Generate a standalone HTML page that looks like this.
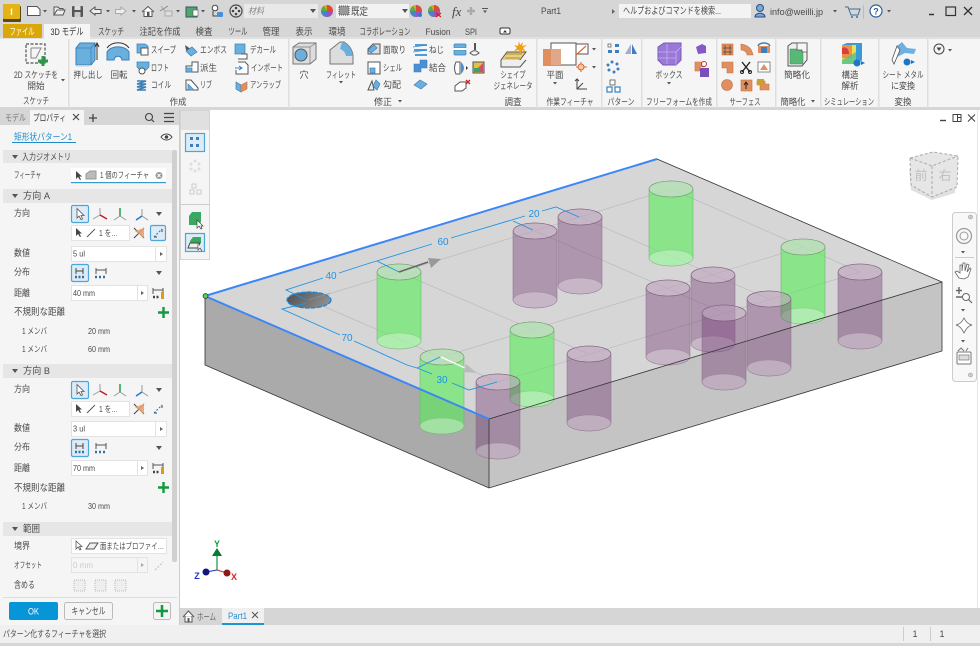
<!DOCTYPE html>
<html lang="ja"><head><meta charset="utf-8"><title>Part1</title>
<style>
html,body{margin:0;padding:0;background:#fff;width:980px;height:646px;overflow:hidden}
svg{display:block;position:absolute;left:0;top:0}
text{font-family:"Liberation Sans","Noto Sans CJK JP",sans-serif;font-size:9px;fill:#4a4a4a}
.c text,text.c{text-anchor:middle}
.b{fill:#6ab0de;stroke:#3a7fb5;stroke-width:.7}
.o{fill:#e09060;stroke:#c87040;stroke-width:.6}
.l{fill:none;stroke:#555;stroke-width:1}
.inp{fill:#fff;stroke:#e3e3e3;stroke-width:1}
.sec{fill:#e6e6e6}
.sel{fill:#dcebf5;stroke:#4ea5d8;stroke-width:1.2}
</style></head><body>
<svg width="980" height="646" viewBox="0 0 980 646" xmlns="http://www.w3.org/2000/svg">
<defs>
<linearGradient id="hg" x1="0" y1="0" x2="1" y2=".3"><stop offset="0" stop-color="#4e4e4e"/><stop offset="1" stop-color="#8c8c8c"/></linearGradient>
<g id="gc"><path d="M-22 0V69A22 8 0 0 0 22 69V0A22 8 0 0 0-22 0Z" fill="#57ec57" fill-opacity=".6" stroke="#6bb06b" stroke-width=".5"/><ellipse cy="69" rx="22" ry="8" fill="#fff" fill-opacity=".32" stroke="#6bb06b" stroke-opacity=".5" stroke-width=".5"/><ellipse rx="22" ry="8" fill="#d8d8d8" fill-opacity=".62" stroke="#6a9a6a" stroke-width=".6"/></g>
<g id="pc"><path d="M-22 0V69A22 8 0 0 0 22 69V0A22 8 0 0 0-22 0Z" fill="#6e326e" fill-opacity=".38" stroke="#8a6a8a" stroke-width=".5"/><ellipse cy="69" rx="22" ry="8" fill="#fff" fill-opacity=".3" stroke="#8a6a8a" stroke-opacity=".5" stroke-width=".5"/><ellipse rx="22" ry="8" fill="#fff" fill-opacity=".3" stroke="#7a5a7a" stroke-width=".6"/></g>
<g id="wheel"><circle r="6" fill="#e2a020"/><path d="M0 0V-6A6 6 0 0 1 6 0Z" fill="#d84a3a"/><path d="M0 0H6A6 6 0 0 1 0 6Z" fill="#a050c0"/><path d="M0 0V6A6 6 0 0 1-6 0Z" fill="#4a80d0"/><path d="M0 0H-6A6 6 0 0 1-3 -5Z" fill="#50b050"/></g>
<g id="tri"><path d="M-3-2H3L0 2Z" fill="#555"/></g>
<g id="dd"><path d="M-2-1H2L0 1.5Z" fill="#555"/></g>
</defs>

<!-- window chrome -->
<rect width="980" height="646" fill="#fff"/>
<rect width="980" height="39" fill="#d6d6d6"/>
<rect y="39" width="980" height="69" fill="#f5f5f5"/>
<rect y="37" width="980" height="2" fill="#e0e0e0"/>
<rect y="107" width="980" height="3" fill="#d6d6d6"/>

<!-- quick access -->
<rect x="3" y="6" width="18" height="16" rx="1" fill="#5a4a10"/>
<rect x="3" y="4" width="17" height="15" rx="1" fill="#e4b416"/>
<text x="11.500" y="15" class="c" style="font-size:9px;font-weight:bold;fill:#fff">I</text>
<path d="M27.500 6.500H37L40 9.500V15.500H27.500Z" fill="#fff" stroke="#555"/><use href="#dd" x="45" y="11"/>
<path d="M54 15V7H58L59.500 8.500H63V10M54 15L57 10H65L63 15Z" fill="#eee" stroke="#555"/>
<rect x="72" y="6" width="11" height="11" rx="1" fill="#555"/><rect x="74.500" y="6" width="6" height="4" fill="#ddd"/><rect x="74.500" y="12" width="6" height="5" fill="#ccc"/>
<path d="M90 11L95 7V9.500H101V13.500H95V15Z" fill="#eee" stroke="#555"/><use href="#dd" x="108" y="11"/>
<path d="M126 11L121 7V9.500H115.500V13.500H121V15Z" fill="#eee" stroke="#aaa"/><use href="#dd" x="134" y="11"/>
<path d="M142 12L148 6.500L154 12M144 11V16.500H152V11" fill="#fff" stroke="#555"/><rect x="147" y="12" width="2.500" height="4.500" fill="#555"/>
<path d="M161 6L165 11V16H172V11H165" fill="#ddd" stroke="#aaa"/><path d="M160 11L168 6" stroke="#888"/><use href="#dd" x="178" y="11"/>
<rect x="186" y="7" width="11" height="10" fill="#4fa86a" stroke="#357"/><rect x="193" y="10" width="5" height="6" fill="#fff" stroke="#555" stroke-width=".6"/><use href="#dd" x="203" y="11"/>
<circle cx="215" cy="8" r="2.800" fill="#fff" stroke="#444"/><path d="M213 11V16H217" fill="none" stroke="#444"/><rect x="217" y="12" width="6" height="5" rx="1" fill="#4a8fd8"/>
<circle cx="236" cy="11" r="6" fill="#ddd" stroke="#444" stroke-width="1.200"/><circle cx="236" cy="8" r="1.300" fill="#444"/><circle cx="236" cy="14" r="1.300" fill="#444"/><circle cx="233" cy="11" r="1.300" fill="#444"/><circle cx="239" cy="11" r="1.300" fill="#444"/>
<rect x="244" y="4" width="74" height="14" fill="#e9e9e9"/><text x="248" y="14" style="font-style:italic;fill:#888" textLength="16" lengthAdjust="spacingAndGlyphs">材料</text><use href="#tri" x="313" y="11"/>
<use href="#wheel" x="327" y="11"/>
<rect x="336" y="4" width="73" height="14" fill="#f2f2f2"/><rect x="339" y="6" width="10" height="9" fill="#999" stroke="#555" stroke-dasharray="1 1"/><text x="351" y="15" style="font-size:10px" textLength="17" lengthAdjust="spacingAndGlyphs">既定</text><use href="#tri" x="405" y="11"/>
<use href="#wheel" x="416" y="11"/><circle cx="420" cy="15" r="2" fill="#2a7fd0"/>
<use href="#wheel" x="434" y="11"/><path d="M436 13L441 17M441 13L436 17" stroke="#d02020" stroke-width="1.300"/>
<text x="452" y="16" style="font-family:'Liberation Serif',serif;font-style:italic;font-size:13px;fill:#444">fx</text>
<path d="M471 7V15M467 11H475" stroke="#aaa" stroke-width="2.500"/>
<path d="M482 8.500H488" stroke="#555"/><use href="#dd" x="485" y="11.500"/>
<text x="541" y="14" style="font-size:9.500px" textLength="20" lengthAdjust="spacingAndGlyphs">Part1</text>
<path d="M612 9L615 11.500L612 14Z" fill="#666"/>
<rect x="619" y="4" width="132" height="14" fill="#f3f3f3"/><text x="623" y="14" style="font-size:9.500px" textLength="98" lengthAdjust="spacingAndGlyphs">ヘルプおよびコマンドを検索...</text>
<circle cx="760" cy="8" r="3.500" fill="#7aa7da" stroke="#2a4f86"/><path d="M755 17C755 12 765 12 765 17Z" fill="#7aa7da" stroke="#2a4f86"/>
<text x="770" y="15" style="font-size:9.500px" textLength="53" lengthAdjust="spacingAndGlyphs">info@weilli.jp</text><use href="#dd" x="835" y="11"/>
<path d="M845 7H848L851 15H858L860 9H849" fill="none" stroke="#3a6f9a"/><circle cx="852" cy="17" r="1" fill="#3a6f9a"/><circle cx="857" cy="17" r="1" fill="#3a6f9a"/>
<path d="M863.500 5V19" stroke="#bbb"/>
<circle cx="876" cy="11" r="6" fill="#fff" stroke="#2a5f96" stroke-width="1.200"/><text x="876" y="14.500" class="c" style="font-size:9px;font-weight:bold;fill:#2a5f96">?</text><use href="#dd" x="889" y="11"/>
<path d="M929 14.500H934" stroke="#333" stroke-width="1.500"/><rect x="946" y="7" width="9.500" height="8.500" fill="none" stroke="#333" stroke-width="1.200"/><path d="M964 7L972 15M972 7L964 15" stroke="#333" stroke-width="1.300"/>

<!-- tabs -->
<rect x="3" y="24" width="39" height="14" fill="#d9a808"/>
<text x="22" y="35" class="c" style="font-size:9.500px;fill:#fff" textLength="25" lengthAdjust="spacingAndGlyphs">ファイル</text>
<rect x="44" y="24" width="46" height="15" fill="#f5f5f5"/>
<g class="c">
<text x="67" y="35" style="font-size:9.500px;fill:#333" textLength="33" lengthAdjust="spacingAndGlyphs">3D モデル</text>
<text x="111" y="35" style="font-size:9.500px" textLength="26" lengthAdjust="spacingAndGlyphs">スケッチ</text>
<text x="160" y="35" style="font-size:9.500px" textLength="41" lengthAdjust="spacingAndGlyphs">注記を作成</text>
<text x="204" y="35" style="font-size:9.500px" textLength="17" lengthAdjust="spacingAndGlyphs">検査</text>
<text x="238" y="35" style="font-size:9.500px" textLength="19" lengthAdjust="spacingAndGlyphs">ツール</text>
<text x="271" y="35" style="font-size:9.500px" textLength="17" lengthAdjust="spacingAndGlyphs">管理</text>
<text x="304" y="35" style="font-size:9.500px" textLength="17" lengthAdjust="spacingAndGlyphs">表示</text>
<text x="337" y="35" style="font-size:9.500px" textLength="17" lengthAdjust="spacingAndGlyphs">環境</text>
<text x="385" y="35" style="font-size:9.500px" textLength="51" lengthAdjust="spacingAndGlyphs">コラボレーション</text>
<text x="438" y="35" style="font-size:9.500px" textLength="25" lengthAdjust="spacingAndGlyphs">Fusion</text>
<text x="471" y="35" style="font-size:9.500px" textLength="12" lengthAdjust="spacingAndGlyphs">SPI</text>
</g>
<rect x="500" y="28" width="10" height="6" rx="1.500" fill="#fff" stroke="#333"/><path d="M503 32.500L505 30L507 32.500Z" fill="#333"/>

<!-- ribbon separators -->
<g fill="#dedede">
<rect x="68" y="39" width="1.500" height="69"/><rect x="288" y="39" width="1.500" height="69"/><rect x="536" y="39" width="1.500" height="69"/><rect x="601" y="39" width="1.500" height="69"/><rect x="641" y="39" width="1.500" height="69"/><rect x="716" y="39" width="1.500" height="69"/><rect x="775" y="39" width="1.500" height="69"/><rect x="820" y="39" width="1.500" height="69"/><rect x="878" y="39" width="1.500" height="69"/><rect x="927" y="39" width="1.500" height="69"/>
</g>

<!-- ribbon icons: sketch / create -->
<rect x="26" y="44" width="19" height="19" fill="none" stroke="#555" stroke-width="1.200" stroke-dasharray="3 1.500"/><path d="M31 48V58H36L41 48H31" fill="none" stroke="#888"/><path d="M43 56V66M38 61H48" stroke="#2a9a4a" stroke-width="3"/>
<path d="M76 48L80 43H95V60L91 65H76Z" fill="#6ab0de" stroke="#3a7fb5"/><path d="M76 48H91V65M91 48L95 43" fill="none" stroke="#3a7fb5" stroke-width=".7"/><path d="M97 60V44M95 47L97 43L99 47" fill="none" stroke="#333"/><path d="M76 65H91L89 66.500H76Z" fill="#ccc"/>
<path d="M107 52C111 45 125 45 129 52L129 60H122C121 55 115 55 114 60H107Z" fill="#6ab0de" stroke="#3a7fb5"/><path d="M107 48C112 41 124 41 129 48" fill="none" stroke="#333"/>
<path d="M137 44H145L148 46V53H137Z" fill="#6ab0de" stroke="#3a7fb5" stroke-width=".7"/><rect x="141" y="48" width="7" height="7" fill="#fff" stroke="#555"/>
<path d="M137 62H149V67L146 70H140L137 67Z" class="b"/><circle cx="142" cy="71" r="3" fill="#fff" stroke="#555"/>
<path d="M137 81H146L137 84H146L137 87H146L137 90H146" fill="none" stroke="#3a7fb5" stroke-width="1.500"/>
<path d="M185 45L195 52L190 54L186 50Z" fill="#555"/><path d="M186 51L192 47L197 52L191 56Z" class="b"/>
<path d="M186 66H192V62H198V72H186Z" fill="#fff" stroke="#555"/><rect x="186" y="68" width="6" height="4" class="b"/>
<path d="M186 90V80H191L198 88V90Z" fill="#fff" stroke="#555"/><path d="M188 90V84L194 90Z" class="b"/>
<rect x="235" y="44" width="10" height="10" class="b"/><path d="M241 54H247V59H238" fill="#fff" stroke="#555"/>
<path d="M238 62H245L248 65V74H236V70" fill="#fff" stroke="#555"/><path d="M235 68H241M239 66L242 68L239 70" fill="none" stroke="#2a7fd0"/>
<path d="M236 82L241 85V92L236 89Z" class="b"/><path d="M241 85L247 82V89L241 92Z" class="o"/>

<!-- modify -->
<path d="M293 47L299 43H316V59L310 64H293Z" fill="#ddd" stroke="#777"/><path d="M293 47H310V64M310 47L316 43" fill="none" stroke="#777" stroke-width=".7"/><circle cx="301" cy="55" r="6" fill="#6ab0de" stroke="#555"/>
<path d="M330 64V50L340 42H344C349 45 352 49 353 55V64Z" fill="#ddd" stroke="#777"/><path d="M342 42C349 44 352 50 353 56L346 56C345 52 343 50 340 49Z" fill="#6ab0de"/>
<path d="M368 49L373 44H380V54H368Z" fill="#ddd" stroke="#555"/><path d="M368 50L374 45L377 48L371 53Z" class="b"/>
<rect x="368" y="62" width="12" height="12" fill="#fff" stroke="#555"/><rect x="370" y="68" width="5" height="5" class="b"/>
<path d="M368 90L372 81L374 90Z" fill="#eee" stroke="#555"/><path d="M376 80L380 84L377 90L373 86Z" class="b"/>
<path d="M415 45H427M414 50H427M415 55H427" stroke="#3a8fd0" stroke-width="1.700" fill="none"/><path d="M413 47L427 45M413 52L427 50" stroke="#3a8fd0" stroke-width=".8"/>
<path d="M414 72V64H420V60H427V68H421V72Z" fill="#4a90d8" stroke="#3a7fb5" stroke-width=".6"/>
<path d="M414 85L420 80L427 84L421 89Z" class="b"/>
<rect x="454" y="44" width="12" height="4" rx="1" class="b"/><rect x="454" y="50" width="12" height="5" rx="1" class="b"/><rect x="454" y="48" width="12" height="2" fill="#fff"/>
<path d="M470 53C473 50 476 50 479 53L476 55H473Z" fill="none" stroke="#555"/><path d="M475 43V50" stroke="#555" stroke-width="2"/>
<path d="M456 62H460V74H456C454 70 454 66 456 62Z" fill="#fff" stroke="#555"/><path d="M461 62C465 66 465 70 461 74Z" fill="#4a90d8"/><path d="M466 66L468 68L466 70Z" fill="#333"/>
<rect x="473" y="62" width="11" height="11" fill="#e8c040" stroke="#555"/><path d="M474 72L483 63V72Z" fill="#d0506a"/><path d="M474 72H480V68H474Z" fill="#40a070"/>
<path d="M455 86L460 82H466V88L462 91H455Z" fill="#fff" stroke="#555"/><path d="M466 80L470 84M470 80L466 84" stroke="#d02020" stroke-width="1.300"/>

<!-- shape generator -->
<path d="M501 60L507 52H526L520 60L501 66Z" fill="#e8d080" stroke="#555"/><path d="M501 60V67L520 67L526 60" fill="#eee" stroke="#555"/><path d="M506 54H522M505 58H520" stroke="#b09030"/>
<path d="M519 41L520 45L523 42L522 46L527 45L523 48L526 52L522 50L520 54L519 50L514 51L517 48L514 45L518 46Z" fill="#f0a010"/>
<!-- plane -->
<rect x="551" y="43" width="25" height="22" fill="#fff" stroke="#555"/><rect x="543" y="49" width="18" height="17" fill="#e09060"/><rect x="551" y="49" width="10" height="16" fill="#e0a888"/>
<rect x="576" y="44" width="12" height="10" fill="#fff" stroke="#555"/><path d="M576 55L586 46" stroke="#d86a30" stroke-width="1.200"/><use href="#dd" x="594" y="49"/>
<path d="M581 62V72M576 67H587" stroke="#d86a30"/><circle cx="581" cy="67" r="3" fill="#f3c8a8" stroke="#d86a30"/><use href="#dd" x="594" y="67"/>
<path d="M577 79V89H587M577 89L583 83" fill="none" stroke="#444"/><path d="M575 81L577 79L579 81" fill="none" stroke="#444"/>
<!-- pattern -->
<rect x="608" y="44" width="3" height="3" fill="#fff" stroke="#555" stroke-width=".7"/><rect x="615" y="44" width="4" height="3" fill="#3a80c0"/><rect x="608" y="50" width="4" height="3" fill="#3a80c0"/><rect x="615" y="50" width="4" height="3" fill="#3a80c0"/>
<path d="M625 54L631 44V54Z" fill="#aac"/><path d="M632 44L637 54H632Z" fill="#3a80c0"/>
<g fill="#3a80c0"><circle cx="612" cy="62" r="1.500"/><circle cx="617" cy="64" r="1.500"/><circle cx="618" cy="69" r="1.500"/><circle cx="614" cy="72" r="1.500"/><circle cx="609" cy="70" r="1.500"/><circle cx="608" cy="65" r="1.500"/></g>
<rect x="610" y="80" width="5" height="5" fill="#fff" stroke="#555" stroke-width=".8"/><rect x="607" y="87" width="5" height="5" fill="#fff" stroke="#3a80c0" stroke-width="1.200"/><rect x="615" y="87" width="5" height="5" fill="#fff" stroke="#3a80c0" stroke-width="1.200"/>
<!-- box -->
<path d="M658 47L664 43H681L681 60L676 65H663L658 60Z" fill="#9a78d8" stroke="#7a58b8"/><path d="M658 52H676V65M676 52L681 47M667 44V64M658 58H676" fill="none" stroke="#c8b0ee" stroke-width=".8"/>
<path d="M696 47L702 44L706 46V53L698 54Z" fill="#8858c8"/>
<path d="M695 62H704V67H700V71H695Z" class="o"/><rect x="700" y="68" width="9" height="9" fill="#7a50b8"/><circle cx="704" cy="64" r="2.500" fill="#fff" stroke="#d03030"/>
<!-- surface -->
<g class="o"><rect x="722" y="44" width="11" height="11"/><path d="M741 44C748 45 752 49 753 55H747C747 52 744 50 741 50Z"/><path d="M722 62H733V73H727V68H722Z"/><circle cx="727" cy="85" r="5.500"/><rect x="741" y="80" width="11" height="11"/><path d="M757 81H765V84H769V90H760V85H757Z"/></g>
<path d="M725 45V55M730 45V55M723 48H732M723 52H732" stroke="#444" stroke-width=".7" fill="none"/>
<path d="M758 46H770V53H758Z" fill="#e09060"/><path d="M758 46C760 42 768 42 770 46" fill="none" stroke="#3a80c0" stroke-width="1.500"/><rect x="761" y="47" width="6" height="6" fill="#3a80c0"/>
<path d="M742 62L750 72M750 62L742 72" stroke="#222" stroke-width="1.400"/><circle cx="742" cy="72" r="1.500" fill="none" stroke="#222"/><circle cx="750" cy="72" r="1.500" fill="none" stroke="#222"/>
<rect x="758" y="62" width="12" height="10" fill="#fff" stroke="#888"/><path d="M760 70L764 64L768 70Z" fill="#e09060"/>
<path d="M746 89V83M744 85L746 82L748 85" stroke="#222" fill="none"/><rect x="757" y="79" width="7" height="6" fill="#c8a030"/>
<!-- simplify -->
<path d="M788 46L792 43H807V60L802 66H788Z" fill="#f0f0f0" stroke="#555"/><rect x="790" y="49" width="13" height="15" fill="#58b878" stroke="#3a8a55" stroke-width=".5"/><path d="M797 43H807V52H802V50H797Z" fill="#f5f5f5" stroke="#555" stroke-width=".8"/>
<!-- analysis -->
<path d="M842 45L847 43H862V60L858 64H842Z" fill="#3a9ad8"/><path d="M842 45H856V64H842Z" fill="#e8e050"/><path d="M842 45H852V58H842Z" fill="#f09040"/><path d="M842 48C846 46 849 49 849 54H842Z" fill="#d84040"/><path d="M842 60L856 52V64H842Z" fill="#50c090" fill-opacity=".8"/>
<circle cx="857" cy="63" r="3.500" fill="#1a78c8"/><path d="M861 61L865 63L861 65Z" fill="#1a78c8"/>
<!-- sheet metal -->
<path d="M892 60L897 46L902 42L907 48L916 49L914 54L905 53L899 56Z" fill="#70b0e0"/><path d="M892 60L897 46L900 50L894 64Z" fill="#fff" stroke="#555" stroke-width=".8"/>
<circle cx="907" cy="62" r="3.500" fill="#1a78c8"/><path d="M911 60L915 62L911 64Z" fill="#1a78c8"/>
<circle cx="939" cy="49" r="5" fill="#f5f5f5" stroke="#444"/><path d="M936.500 47.500H941.500L939 51Z" fill="#444"/><use href="#dd" x="950" y="50"/>

<!-- ribbon text -->
<g class="c">
<text x="36" y="78" textLength="44" lengthAdjust="spacingAndGlyphs">2D スケッチを</text><text x="36" y="89" textLength="17" lengthAdjust="spacingAndGlyphs">開始</text><use href="#dd" x="63" y="80"/>
<text x="36" y="104" textLength="26" lengthAdjust="spacingAndGlyphs">スケッチ</text><text x="178" y="105" textLength="17" lengthAdjust="spacingAndGlyphs">作成</text>
<text x="88" y="78" textLength="29" lengthAdjust="spacingAndGlyphs">押し出し</text><text x="119" y="78" textLength="17" lengthAdjust="spacingAndGlyphs">回転</text>
<text x="304" y="78">穴</text><text x="341" y="78" textLength="30" lengthAdjust="spacingAndGlyphs">フィレット</text><use href="#dd" x="341" y="82"/>
<text x="383" y="105" textLength="18" lengthAdjust="spacingAndGlyphs">修正</text><use href="#dd" x="400" y="101"/>
<text x="513" y="78" textLength="25" lengthAdjust="spacingAndGlyphs">シェイプ</text><text x="513" y="89" textLength="39" lengthAdjust="spacingAndGlyphs">ジェネレータ</text><text x="513" y="105" textLength="17" lengthAdjust="spacingAndGlyphs">調査</text>
<text x="555" y="78" textLength="17" lengthAdjust="spacingAndGlyphs">平面</text><use href="#dd" x="555" y="83"/><text x="570" y="105" textLength="47" lengthAdjust="spacingAndGlyphs">作業フィーチャ</text>
<text x="621" y="105" textLength="27" lengthAdjust="spacingAndGlyphs">パターン</text>
<text x="669" y="78" textLength="27" lengthAdjust="spacingAndGlyphs">ボックス</text><use href="#dd" x="669" y="83"/><text x="679" y="105" textLength="66" lengthAdjust="spacingAndGlyphs">フリーフォームを作成</text>
<text x="745" y="105" textLength="31" lengthAdjust="spacingAndGlyphs">サーフェス</text>
<text x="797" y="78" textLength="26" lengthAdjust="spacingAndGlyphs">簡略化</text><text x="793" y="105" textLength="25" lengthAdjust="spacingAndGlyphs">簡略化</text><use href="#dd" x="813" y="101"/>
<text x="850" y="78" textLength="17" lengthAdjust="spacingAndGlyphs">構造</text><text x="850" y="89" textLength="17" lengthAdjust="spacingAndGlyphs">解析</text><text x="849" y="105" textLength="50" lengthAdjust="spacingAndGlyphs">シミュレーション</text>
<text x="903" y="78" textLength="41" lengthAdjust="spacingAndGlyphs">シート メタル</text><text x="903" y="89" textLength="24" lengthAdjust="spacingAndGlyphs">に変換</text><text x="903" y="105" textLength="17" lengthAdjust="spacingAndGlyphs">変換</text>
</g>
<text x="151" y="53" textLength="25" lengthAdjust="spacingAndGlyphs">スイープ</text><text x="151" y="71" textLength="18" lengthAdjust="spacingAndGlyphs">ロフト</text><text x="151" y="88" textLength="20" lengthAdjust="spacingAndGlyphs">コイル</text>
<text x="200" y="53" textLength="27" lengthAdjust="spacingAndGlyphs">エンボス</text><text x="200" y="71" textLength="17" lengthAdjust="spacingAndGlyphs">派生</text><text x="200" y="88" textLength="12" lengthAdjust="spacingAndGlyphs">リブ</text>
<text x="250" y="53" textLength="26" lengthAdjust="spacingAndGlyphs">デカール</text><text x="251" y="71" textLength="32" lengthAdjust="spacingAndGlyphs">インポート</text><text x="250" y="88" textLength="31" lengthAdjust="spacingAndGlyphs">アンラップ</text>
<text x="383" y="53" textLength="23" lengthAdjust="spacingAndGlyphs">面取り</text><text x="383" y="71" textLength="19" lengthAdjust="spacingAndGlyphs">シェル</text><text x="383" y="88" textLength="18" lengthAdjust="spacingAndGlyphs">勾配</text>
<text x="429" y="53" textLength="15" lengthAdjust="spacingAndGlyphs">ねじ</text><text x="429" y="71" textLength="17" lengthAdjust="spacingAndGlyphs">結合</text>

<!-- left panel -->
<rect y="110" width="179" height="515" fill="#f5f5f5"/>
<rect y="110" width="179" height="15" fill="#d6d6d6"/>
<rect x="30" y="110" width="54" height="15" fill="#f5f5f5"/>
<text x="5" y="121" style="fill:#777" textLength="21" lengthAdjust="spacingAndGlyphs">モデル</text><text x="33" y="121" style="fill:#333" textLength="33" lengthAdjust="spacingAndGlyphs">プロパティ</text>
<path d="M73 114L79 120M79 114L73 120" stroke="#444" stroke-width="1.100"/>
<path d="M93 114V122M89 118H97" stroke="#444" stroke-width="1.300"/>
<circle cx="149" cy="117" r="3.500" fill="none" stroke="#444" stroke-width="1.100"/><path d="M151.500 119.500L154 122" stroke="#444" stroke-width="1.200"/>
<path d="M164 113.500H174M164 117.500H174M164 121.500H174" stroke="#444" stroke-width="1.300"/>
<rect x="179" y="110" width="1" height="515" fill="#ccc"/>

<text x="14" y="140" style="font-size:9px;fill:#1e8bc9" textLength="58" lengthAdjust="spacingAndGlyphs">矩形状パターン1</text>
<rect x="12" y="142" width="64" height="1" fill="#1e8bc9"/>
<path d="M161 137C164 133 169 133 172 137C169 141 164 141 161 137Z" fill="#fff" stroke="#444"/><circle cx="166.500" cy="137" r="1.800" fill="#444"/>

<!-- sections -->
<rect x="3" y="150" width="169" height="13" class="sec"/>
<rect x="3" y="189" width="169" height="14" class="sec"/>
<rect x="3" y="364" width="169" height="14" class="sec"/>
<rect x="3" y="522" width="169" height="14" class="sec"/>
<rect x="172" y="150" width="5" height="412" rx="2" fill="#d0d0d0"/>
<use href="#tri" x="15" y="157"/><use href="#tri" x="15" y="196"/><use href="#tri" x="15" y="371"/><use href="#tri" x="15" y="529"/>
<text x="22" y="160" textLength="49" lengthAdjust="spacingAndGlyphs">入力ジオメトリ</text>
<text x="23" y="199" style="font-size:9.500px" textLength="27" lengthAdjust="spacingAndGlyphs">方向 A</text>
<text x="23" y="374" style="font-size:9.500px" textLength="27" lengthAdjust="spacingAndGlyphs">方向 B</text>
<text x="23" y="532" style="font-size:9.500px" textLength="17" lengthAdjust="spacingAndGlyphs">範囲</text>

<!-- feature row -->
<text x="14" y="178" textLength="27" lengthAdjust="spacingAndGlyphs">フィーチャ</text>
<rect x="71" y="168" width="95" height="15" fill="#fff"/><rect x="71" y="182" width="95" height="1.200" fill="#3a9ad0"/>
<path d="M76 171V179L78 177L80 180L81 179.500L79.500 176.500H82Z" fill="#444"/>
<path d="M86 179V174L90 171H96V179Z" fill="#bbb" stroke="#999"/>
<text x="100" y="178" style="font-size:8.500px" textLength="49" lengthAdjust="spacingAndGlyphs">1 個のフィーチャ</text>
<circle cx="159" cy="175.500" r="3.500" fill="#999"/><path d="M157.500 174L160.500 177M160.500 174L157.500 177" stroke="#fff"/>

<!-- direction A -->
<text x="14" y="216" textLength="16" lengthAdjust="spacingAndGlyphs">方向</text>
<rect x="71.500" y="205.500" width="17" height="17" rx="1.500" class="sel"/>
<path d="M77 208.500V218L79 216L81 219.500L82.500 219L81 215.500H84Z" fill="#fff" stroke="#555" stroke-width=".8"/>
<g transform="translate(100,215)"><path d="M0 0V-7L0 0L-7 4" stroke="#999" fill="none"/><path d="M0 0L7 4" stroke="#c02020" stroke-width="1.500"/></g>
<g transform="translate(120,216)"><path d="M0 0L-6 4M0 0L6 4" stroke="#999" fill="none"/><path d="M0 0V-8" stroke="#20a040" stroke-width="1.500"/></g>
<g transform="translate(142,216)"><path d="M0 0V-7M0 0L6 4" stroke="#999" fill="none"/><path d="M0 0L-6 4" stroke="#1a78d0" stroke-width="1.500"/></g>
<use href="#tri" x="159" y="214"/>
<rect x="71.500" y="225.500" width="58" height="15" class="inp"/>
<path d="M76 228V236L78 234L80 237L81 236.500L79.500 233.500H82Z" fill="#444"/><path d="M87 237L95 229" stroke="#555"/>
<text x="99" y="236" style="font-size:8.500px" textLength="19" lengthAdjust="spacingAndGlyphs">1 を…</text>
<path d="M134 228L144 238M134 238L144 228" stroke="#444"/><path d="M135 231L144 228V238Z" fill="#e8a070" fill-opacity=".9"/>
<rect x="150.500" y="225.500" width="15" height="15" rx="1.500" class="sel"/><path d="M154 237L162 229" stroke="#1a78d0" stroke-dasharray="2 1.500"/><path d="M154 237H157M162 229V232" stroke="#444"/>
<text x="14" y="256" textLength="16" lengthAdjust="spacingAndGlyphs">数値</text>
<rect x="71.500" y="246.500" width="95" height="15" class="inp"/><rect x="155" y="247" width="1" height="14" fill="#e3e3e3"/>
<text x="73" y="256.500" style="font-size:8px" textLength="12" lengthAdjust="spacingAndGlyphs">5 ul</text><path d="M160 252L163 254L160 256Z" fill="#666"/>
<text x="14" y="275" textLength="16" lengthAdjust="spacingAndGlyphs">分布</text>
<rect x="71.500" y="264.500" width="17" height="17" rx="1.500" class="sel"/>
<path d="M76 268V274M83 268V274M76 271H83" stroke="#444" fill="none"/><path d="M75 277H85" stroke="#3a6fa0" stroke-width="2.400" stroke-dasharray="2 1.500"/>
<path d="M96 268V274M106 268V274M96 270H106" stroke="#555" fill="none"/><path d="M95 277H107" stroke="#3a6fa0" stroke-width="2.400" stroke-dasharray="2 2"/>
<use href="#tri" x="159" y="273"/>
<text x="14" y="296" textLength="16" lengthAdjust="spacingAndGlyphs">距離</text>
<rect x="71.500" y="285.500" width="76" height="15" class="inp"/><rect x="137" y="286" width="1" height="14" fill="#e3e3e3"/>
<text x="73" y="296" style="font-size:8.500px" textLength="22" lengthAdjust="spacingAndGlyphs">40 mm</text><path d="M141 291L144 293L141 295Z" fill="#666"/>
<path d="M153 288V294M163 288V294M153 290H163" stroke="#555" fill="none"/><path d="M153 297H159" stroke="#444" stroke-width="2.400" stroke-dasharray="2 1.500"/><rect x="161" y="292" width="3" height="7" fill="#dd9a1a"/>
<text x="14" y="315" style="font-size:9.500px" textLength="51" lengthAdjust="spacingAndGlyphs">不規則な距離</text>
<path d="M163.500 307V318M158 312.500H169" stroke="#109a40" stroke-width="2.400"/>
<text x="22" y="334" style="font-size:8.500px" textLength="25" lengthAdjust="spacingAndGlyphs">1 メンバ</text><text x="88" y="334" style="font-size:8.500px" textLength="22" lengthAdjust="spacingAndGlyphs">20 mm</text>
<text x="22" y="352" style="font-size:8.500px" textLength="25" lengthAdjust="spacingAndGlyphs">1 メンバ</text><text x="88" y="352" style="font-size:8.500px" textLength="22" lengthAdjust="spacingAndGlyphs">60 mm</text>

<!-- direction B -->
<text x="14" y="392" textLength="16" lengthAdjust="spacingAndGlyphs">方向</text>
<rect x="71.500" y="381.500" width="17" height="17" rx="1.500" class="sel"/>
<path d="M77 384.500V394L79 392L81 395.500L82.500 395L81 391.500H84Z" fill="#fff" stroke="#555" stroke-width=".8"/>
<g transform="translate(100,391)"><path d="M0 0V-7L0 0L-7 4" stroke="#999" fill="none"/><path d="M0 0L7 4" stroke="#c02020" stroke-width="1.500"/></g>
<g transform="translate(120,392)"><path d="M0 0L-6 4M0 0L6 4" stroke="#999" fill="none"/><path d="M0 0V-8" stroke="#20a040" stroke-width="1.500"/></g>
<g transform="translate(142,392)"><path d="M0 0V-7M0 0L6 4" stroke="#999" fill="none"/><path d="M0 0L-6 4" stroke="#1a78d0" stroke-width="1.500"/></g>
<use href="#tri" x="159" y="390"/>
<rect x="71.500" y="401.500" width="58" height="15" class="inp"/>
<path d="M76 404V412L78 410L80 413L81 412.500L79.500 409.500H82Z" fill="#444"/><path d="M87 413L95 405" stroke="#555"/>
<text x="99" y="412" style="font-size:8.500px" textLength="19" lengthAdjust="spacingAndGlyphs">1 を…</text>
<path d="M134 404L144 414M134 414L144 404" stroke="#444"/><path d="M135 407L144 404V414Z" fill="#e8a070" fill-opacity=".9"/>
<path d="M154 413L162 405" stroke="#1a78d0" stroke-dasharray="2 1.500"/><path d="M154 413H157M162 405V408" stroke="#444"/>
<text x="14" y="431" textLength="16" lengthAdjust="spacingAndGlyphs">数値</text>
<rect x="71.500" y="421.500" width="95" height="15" class="inp"/><rect x="155" y="422" width="1" height="14" fill="#e3e3e3"/>
<text x="73" y="431.500" style="font-size:8px" textLength="12" lengthAdjust="spacingAndGlyphs">3 ul</text><path d="M160 427L163 429L160 431Z" fill="#666"/>
<text x="14" y="450" textLength="16" lengthAdjust="spacingAndGlyphs">分布</text>
<rect x="71.500" y="439.500" width="17" height="17" rx="1.500" class="sel"/>
<path d="M76 443V449M83 443V449M76 446H83" stroke="#444" fill="none"/><path d="M75 452H85" stroke="#3a6fa0" stroke-width="2.400" stroke-dasharray="2 1.500"/>
<path d="M96 443V449M106 443V449M96 445H106" stroke="#555" fill="none"/><path d="M95 452H107" stroke="#3a6fa0" stroke-width="2.400" stroke-dasharray="2 2"/>
<use href="#tri" x="159" y="448"/>
<text x="14" y="471" textLength="16" lengthAdjust="spacingAndGlyphs">距離</text>
<rect x="71.500" y="460.500" width="76" height="15" class="inp"/><rect x="137" y="461" width="1" height="14" fill="#e3e3e3"/>
<text x="73" y="471" style="font-size:8.500px" textLength="22" lengthAdjust="spacingAndGlyphs">70 mm</text><path d="M141 466L144 468L141 470Z" fill="#666"/>
<path d="M153 463V469M163 463V469M153 465H163" stroke="#555" fill="none"/><path d="M153 472H159" stroke="#444" stroke-width="2.400" stroke-dasharray="2 1.500"/><rect x="161" y="467" width="3" height="7" fill="#dd9a1a"/>
<text x="14" y="491" style="font-size:9.500px" textLength="51" lengthAdjust="spacingAndGlyphs">不規則な距離</text>
<path d="M163.500 482V493M158 487.500H169" stroke="#109a40" stroke-width="2.400"/>
<text x="22" y="509" style="font-size:8.500px" textLength="25" lengthAdjust="spacingAndGlyphs">1 メンバ</text><text x="88" y="509" style="font-size:8.500px" textLength="22" lengthAdjust="spacingAndGlyphs">30 mm</text>

<!-- extent -->
<text x="14" y="549" textLength="16" lengthAdjust="spacingAndGlyphs">境界</text>
<rect x="71.500" y="538.500" width="95" height="15" class="inp"/>
<path d="M76 541V549L78 547L80 550L81 549.500L79.500 546.500H82Z" fill="#fff" stroke="#555" stroke-width=".8"/>
<path d="M86 549L90 543H98L94 549Z" fill="#eee" stroke="#555"/>
<text x="100" y="549" style="font-size:8.500px" textLength="64" lengthAdjust="spacingAndGlyphs">面またはプロファイ…</text>
<text x="14" y="568" style="font-size:8.500px" textLength="28" lengthAdjust="spacingAndGlyphs">オフセット</text>
<rect x="71.500" y="557.500" width="76" height="15" fill="#f5f5f5" stroke="#e3e3e3"/><rect x="137" y="558" width="1" height="14" fill="#e3e3e3"/>
<text x="73" y="568" style="font-size:8.500px;fill:#ccc" textLength="20" lengthAdjust="spacingAndGlyphs">0 mm</text><path d="M141 563L144 565L141 567Z" fill="#aaa"/>
<path d="M155 570L163 562" stroke="#bbb" stroke-dasharray="2 1.500"/>
<text x="14" y="588" textLength="21" lengthAdjust="spacingAndGlyphs">含める</text>
<g fill="#eee" stroke="#bbb" stroke-dasharray="1 1">
<rect x="74" y="580" width="11" height="11"/><rect x="95" y="580" width="11" height="11"/><rect x="115" y="580" width="11" height="11"/>
</g>
<rect x="3" y="597" width="174" height="1" fill="#ddd"/>
<rect x="9" y="602" width="49" height="18" rx="2" fill="#0696d7"/>
<text x="33.500" y="614.500" class="c" style="fill:#fff;font-size:9.500px" textLength="11" lengthAdjust="spacingAndGlyphs">OK</text>
<rect x="64.500" y="602.500" width="48" height="17" rx="2" fill="#f5f5f5" stroke="#bbb"/>
<text x="88.500" y="614.500" class="c" style="font-size:9.500px" textLength="34" lengthAdjust="spacingAndGlyphs">キャンセル</text>
<rect x="153.500" y="602.500" width="17" height="17" rx="2" fill="#f5f5f5" stroke="#bbb"/>
<path d="M162 605V617M156 611H168" stroke="#109a40" stroke-width="2.500"/>

<!-- floating toolbar -->
<rect x="180.500" y="110.500" width="29" height="149" fill="#f5f5f5" stroke="#d4d4d4"/>
<rect x="181" y="111" width="28" height="19" fill="#e0e0e0"/>
<rect x="181" y="204" width="28" height="1" fill="#ccc"/>
<rect x="185.500" y="133.500" width="19" height="18" class="sel"/>
<g fill="#3a80c0"><rect x="190" y="137" width="3" height="3"/><rect x="196" y="137" width="3" height="3"/><rect x="190" y="144" width="3" height="3"/><rect x="196" y="144" width="3" height="3"/></g>
<g fill="#ddd"><circle cx="195" cy="161" r="1.500"/><circle cx="199" cy="164" r="1.500"/><circle cx="199" cy="169" r="1.500"/><circle cx="195" cy="171" r="1.500"/><circle cx="191" cy="169" r="1.500"/><circle cx="191" cy="164" r="1.500"/></g>
<g fill="none" stroke="#ccc"><rect x="192" y="184" width="4" height="4"/><rect x="190" y="190" width="4" height="4"/><rect x="197" y="190" width="4" height="4"/></g>
<path d="M189 216L192 212H201V222L198 225H189Z" fill="#3aa860"/><path d="M197 220V228L199 226L201 229L202 228.500L201 226H203Z" fill="#fff" stroke="#444" stroke-width=".7"/>
<rect x="185.500" y="233.500" width="19" height="18" class="sel"/>
<path d="M190 241L193 237H201V243H190Z" fill="#3aa860"/><path d="M188 248L190 243H200L198 248Z" fill="#eee" stroke="#444"/><path d="M198 243V250L200 248L202 251" fill="#fff" stroke="#444" stroke-width=".7"/>

<!-- model -->
<path d="M205 296L657 159L942 282L489 419Z" fill="#d6d6d6"/>
<path d="M205 296L489 419V488L205 365Z" fill="#aaaaaa"/>
<path d="M489 419L942 282V351L489 488Z" fill="#c4c4c4"/>
<g stroke="#bbb" stroke-width=".7" fill="none">
<path d="M309 300L671 189M442 357L803 247M498 382L860 272M309 300L498 382M399 272L589 354M535 231L724 313M580 217L769 299M671 189L860 272"/>
</g>
<use href="#gc" x="671" y="189"/><use href="#gc" x="803" y="247"/><use href="#gc" x="532" y="330"/><use href="#gc" x="399" y="272"/><use href="#gc" x="442" y="357"/>
<use href="#pc" x="580" y="217"/><use href="#pc" x="535" y="231"/><use href="#pc" x="713" y="275"/><use href="#pc" x="668" y="288"/><use href="#pc" x="769" y="299"/><use href="#pc" x="860" y="272"/><use href="#pc" x="724" y="313"/><use href="#pc" x="589" y="354"/><use href="#pc" x="498" y="382"/>
<g stroke="#333" stroke-width=".8" fill="none">
<path d="M489 419L942 282L942 351L489 488L205 365V296M489 419V488M657 159L942 282"/>
</g>
<path d="M205 296L657 159M205 296L489 419" stroke="#3d86f5" stroke-width="2" fill="none"/>
<circle cx="205.500" cy="296" r="2.500" fill="#50d050" stroke="#333" stroke-width=".7"/>
<!-- hole -->
<ellipse cx="309" cy="300" rx="22" ry="8" fill="url(#hg)"/>
<ellipse cx="309" cy="300" rx="22" ry="8" fill="none" stroke="#1a86e0" stroke-width="1.300" stroke-dasharray="5 1"/>
<path d="M309 300L330 293" stroke="#999" stroke-width=".6"/>
<!-- dims -->
<g fill="none" stroke="#1c94e4" stroke-width=".9">
<path d="M307 300L286 290L323 278M339 273L370 263L380 260L432 244M451 238L515 219L525 216M542 211L556 207L579 217M377 261L399 272M513 221L533 230"/>
<path d="M307 303L282 309L340 335M354 341L407 365L417 368L432 374M452 383L469 390L497 382M417 368L440 357"/>
</g>
<g class="c">
<text x="331" y="279" style="fill:#1c94e4;font-size:10px">40</text>
<text x="443" y="245" style="fill:#1c94e4;font-size:10px">60</text>
<text x="534" y="217" style="fill:#1c94e4;font-size:10px">20</text>
<text x="347" y="341" style="fill:#1c94e4;font-size:10px">70</text>
<text x="442" y="383" style="fill:#1c94e4;font-size:10px">30</text>
</g>
<path d="M399 272L428 262" stroke="#666" stroke-width="1.500"/><path d="M428 258L441 259L431 268Z" fill="#999"/>
<path d="M441 357L465 368" stroke="#fff" stroke-width="1.500"/><path d="M466 364L477 373L463 372Z" fill="#bbb"/>

<!-- triad -->
<path d="M217 555V570" stroke="#109a40" stroke-width="1.200"/><path d="M212 556L217 548L222 556Z" fill="#0a7a30"/>
<path d="M217 570L227 573" stroke="#b03030"/><path d="M217 570L206 572" stroke="#2030b0"/>
<circle cx="227" cy="573" r="3.500" fill="#901818"/><circle cx="206" cy="572" r="3.500" fill="#101880"/>
<text x="217" y="547" class="c" style="font-weight:bold;font-size:9px;fill:#109a40">Y</text>
<text x="234" y="580" class="c" style="font-weight:bold;font-size:9px;fill:#e02020">X</text>
<text x="197" y="579" class="c" style="font-weight:bold;font-size:9px;fill:#2030d0">Z</text>

<!-- view cube -->
<path d="M909 166L922 152L944 152L958 160L955 190L932 197L911 187Z" fill="#000" fill-opacity=".12" transform="translate(0,3)"/>
<path d="M910 158L933 152L958 156L957 187L932 197L911 185Z" fill="#e6e6e6"/>
<path d="M910 158L932 166L958 156M932 166V197M910 158L911 185L932 197L957 187L958 156L933 152Z" fill="none" stroke="#aaa" stroke-dasharray="3 2"/>
<text x="921" y="180" class="c" style="font-size:13px;fill:#c0c0c0">前</text>
<text x="945" y="180" class="c" style="font-size:13px;fill:#c0c0c0">右</text>

<!-- nav bar -->
<rect x="952.500" y="212.500" width="24" height="169" rx="3" fill="#f8f8f8" stroke="#ccc"/>
<rect x="977" y="110" width="1" height="498" fill="#e6e6e6"/>
<circle cx="970.500" cy="217" r="2" fill="#ccc" stroke="#999" stroke-width=".6"/><circle cx="970.500" cy="375" r="2" fill="#ccc" stroke="#999" stroke-width=".6"/>
<circle cx="964" cy="236" r="7.500" fill="none" stroke="#999" stroke-width="1.200"/><circle cx="964" cy="236" r="4" fill="none" stroke="#999"/>
<use href="#dd" x="963" y="252"/><rect x="955" y="257" width="19" height="1" fill="#ccc"/>
<path d="M959 278L955 272L957 271L960 273L960 265L962 265V271L963 263L965 263V271L967 264L969 265L967 272L970 268L971 269L968 277L964 279Z" fill="#fff" stroke="#666" stroke-width=".8"/>
<path d="M959 287V294M956 290.500H962M956 297H962" stroke="#666" stroke-width="1.400"/><circle cx="966" cy="297" r="3.500" fill="#fff" stroke="#666"/><path d="M968.500 299.500L972 303" stroke="#666" stroke-width="1.200"/>
<use href="#dd" x="963" y="310"/>
<path d="M964 318C966 322 968 324 972 325C968 326 966 329 964 333C962 329 960 326 956 325C960 324 962 322 964 318Z" fill="#fff" stroke="#666" stroke-width=".8"/>
<use href="#dd" x="963" y="341"/>
<rect x="957" y="352" width="14" height="12" rx="1" fill="#fff" stroke="#777"/><rect x="959" y="355" width="10" height="5" fill="#ddd" stroke="#777" stroke-width=".7"/><path d="M958 351L961 348L964 351M966 351L968 348" stroke="#777" fill="none"/>

<!-- viewport controls -->
<path d="M940 120.500H946" stroke="#444" stroke-width="1.400"/>
<rect x="953" y="114.500" width="8" height="7" fill="none" stroke="#444"/><path d="M957.500 115V121M957.500 117.500H961" stroke="#444"/>
<path d="M968 114.500L975 121.500M975 114.500L968 121.500" stroke="#444" stroke-width="1.100"/>

<!-- document tabs -->
<rect x="180" y="608" width="800" height="17" fill="#d6d6d6"/>
<rect x="222" y="608" width="42" height="17" fill="#f0f0f0"/><rect x="222" y="623" width="42" height="2" fill="#1c94d8"/>
<path d="M183 617L188.500 611L194 617M185 616V622H192V616" fill="#fff" stroke="#555"/><rect x="187.500" y="618" width="2" height="4" fill="#555"/>
<text x="197" y="620" style="font-size:9px;fill:#666" textLength="19" lengthAdjust="spacingAndGlyphs">ホーム</text>
<text x="228" y="619" style="font-size:9.500px;fill:#2a8fd0" textLength="19" lengthAdjust="spacingAndGlyphs">Part1</text>
<path d="M252 612L258 618M258 612L252 618" stroke="#555"/>

<!-- status -->
<rect y="625" width="980" height="18" fill="#f0f0f0"/>
<rect y="643" width="980" height="3" fill="#d6d6d6"/>
<text x="3" y="637" style="font-size:9px" textLength="103" lengthAdjust="spacingAndGlyphs">パターン化するフィーチャを選択</text>
<rect x="903" y="627" width="1" height="14" fill="#ccc"/><rect x="930" y="627" width="1" height="14" fill="#ccc"/>
<text x="915" y="637" class="c">1</text><text x="942" y="637" class="c">1</text>
</svg>
</body></html>
